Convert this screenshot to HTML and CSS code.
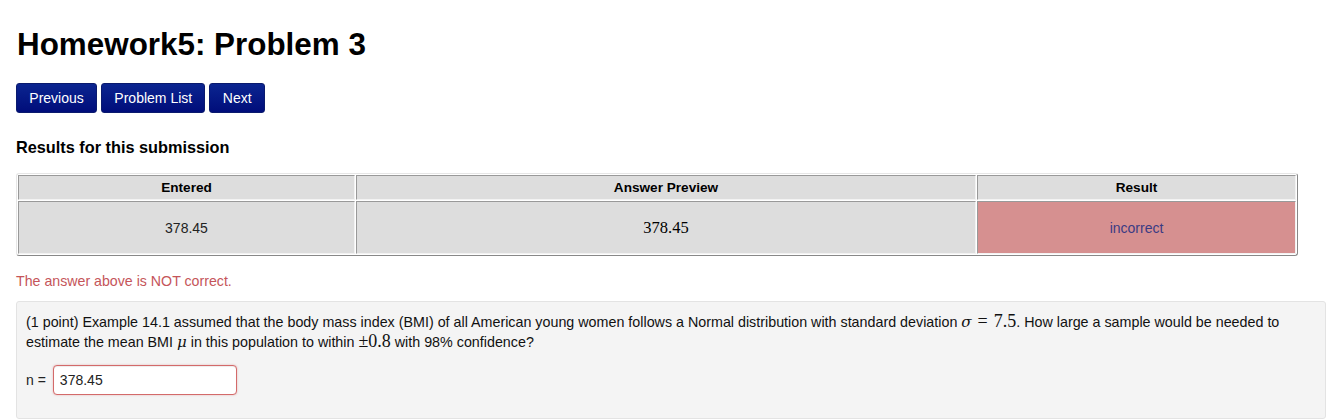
FILE: index.html
```html
<!DOCTYPE html>
<html>
<head>
<meta charset="utf-8">
<link rel="stylesheet" href="styles.css">
</head>
<body>
<h1 class="title">Homework5: Problem 3</h1>
<div class="nav">
  <a class="btn">Previous</a>
  <a class="btn">Problem List</a>
  <a class="btn">Next</a>
</div>
<h2 class="results-title">Results for this submission</h2>
<table class="attempt">
  <tr class="head">
    <th class="c1">Entered</th>
    <th class="c2">Answer Preview</th>
    <th class="c3">Result</th>
  </tr>
  <tr class="body">
    <td>378.45</td>
    <td class="preview">378.45</td>
    <td class="bad">incorrect</td>
  </tr>
</table>
<div class="message">The answer above is NOT correct.</div>
<div class="problem">
  <p class="text">(1 point) Example 14.1 assumed that the body mass index (BMI) of all American young women follows a Normal distribution with standard deviation <span class="math"><i class="var">σ</i><span class="op">=</span>7.5</span>. How large a sample would be needed to estimate the mean BMI <span class="math"><i class="var">μ</i></span> in this population to within <span class="math">±0.8</span> with 98% confidence?</p>
  <div class="answer">
    <span class="label">n =</span>
    <input class="field" type="text" value="378.45">
  </div>
</div>
</body>
</html>
```
FILE: styles.css
```css
body {
  margin: 0;
  padding: 0 16px;
  font-family: "Liberation Sans", Arial, sans-serif;
  font-size: 14px;
  color: #000;
  background: #fff;
}
.title {
  margin: 0;
  padding-top: 28px;
  font-size: 31.4px;
  line-height: 34px;
  font-weight: bold;
  padding-left: 1px;
}
.nav {
  display: flex;
  gap: 4px;
  margin-top: 21px;
}
.btn {
  display: block;
  height: 30px;
  box-sizing: border-box;
  padding: 0 12.3px;
  line-height: 28px;
  color: #fff;
  font-size: 14px;
  background: linear-gradient(#0b2590, #000d7a);
  border: 1px solid #0a1a6e;
  border-radius: 3px;
}
.results-title {
  margin: 25px 0 0;
  font-size: 16.3px;
  line-height: 18px;
  font-weight: bold;
}
.attempt {
  margin-top: 17px;
  width: 1282px;
  border-collapse: separate;
  border-spacing: 1px;
  border: 1px solid;
  border-color: #e6e6e6 #888 #888 #e6e6e6;
  border-radius: 3px;
  font-size: 14px;
}
.attempt th, .attempt td {
  background: #dddddd;
  text-align: center;
  border: 1px solid;
  border-color: #999 #f2f2f2 #f2f2f2 #999;
  padding: 0;
}
.attempt th {
  height: 23px;
  font-weight: bold;
  font-size: 13.6px;
}
.attempt td {
  height: 51px;
  color: #222;
}
.c1 { width: 335px; }
.c2 { width: 618px; }
.attempt td.preview {
  font-family: "Liberation Serif", "DejaVu Serif", serif;
  font-size: 16.5px;
  color: #000;
}
.attempt td.bad {
  background: #d69090;
  color: #3b3b84;
  font-size: 14px;
}
.message {
  margin-top: 16px;
  color: #c5555a;
  font-size: 14.2px;
  line-height: 18px;
}
.problem {
  margin-top: 11px;
  margin-right: -13px;
  background: #f4f4f4;
  border: 1px solid #e3e3e3;
  border-radius: 3px;
  padding: 10px 9px 22px;
  height: 84px;
}
.text {
  margin: 0;
  line-height: 20px;
  color: #111;
  font-size: 14.3px;
}
.math {
  font-family: "Liberation Serif", "DejaVu Serif", serif;
  font-size: 18px;
  line-height: 1;
}
.math .var {
  font-family: "DejaVu Serif", serif;
  font-size: 15px;
  font-style: italic;
}
.math .op {
  padding: 0 6px;
}
.answer {
  display: flex;
  align-items: center;
  gap: 7px;
  margin-top: 13px;
}
.label {
  color: #222;
}
.field {
  width: 184px;
  height: 30px;
  box-sizing: border-box;
  border: 1px solid #d36a6a;
  border-radius: 4px;
  padding: 0 6px;
  font-family: "Liberation Sans", Arial, sans-serif;
  font-size: 14px;
  color: #222;
  background: #fff;
  box-shadow: inset 0 1px 1px rgba(0,0,0,0.075), 0 0 2px rgba(211,106,106,0.5);
}
```
